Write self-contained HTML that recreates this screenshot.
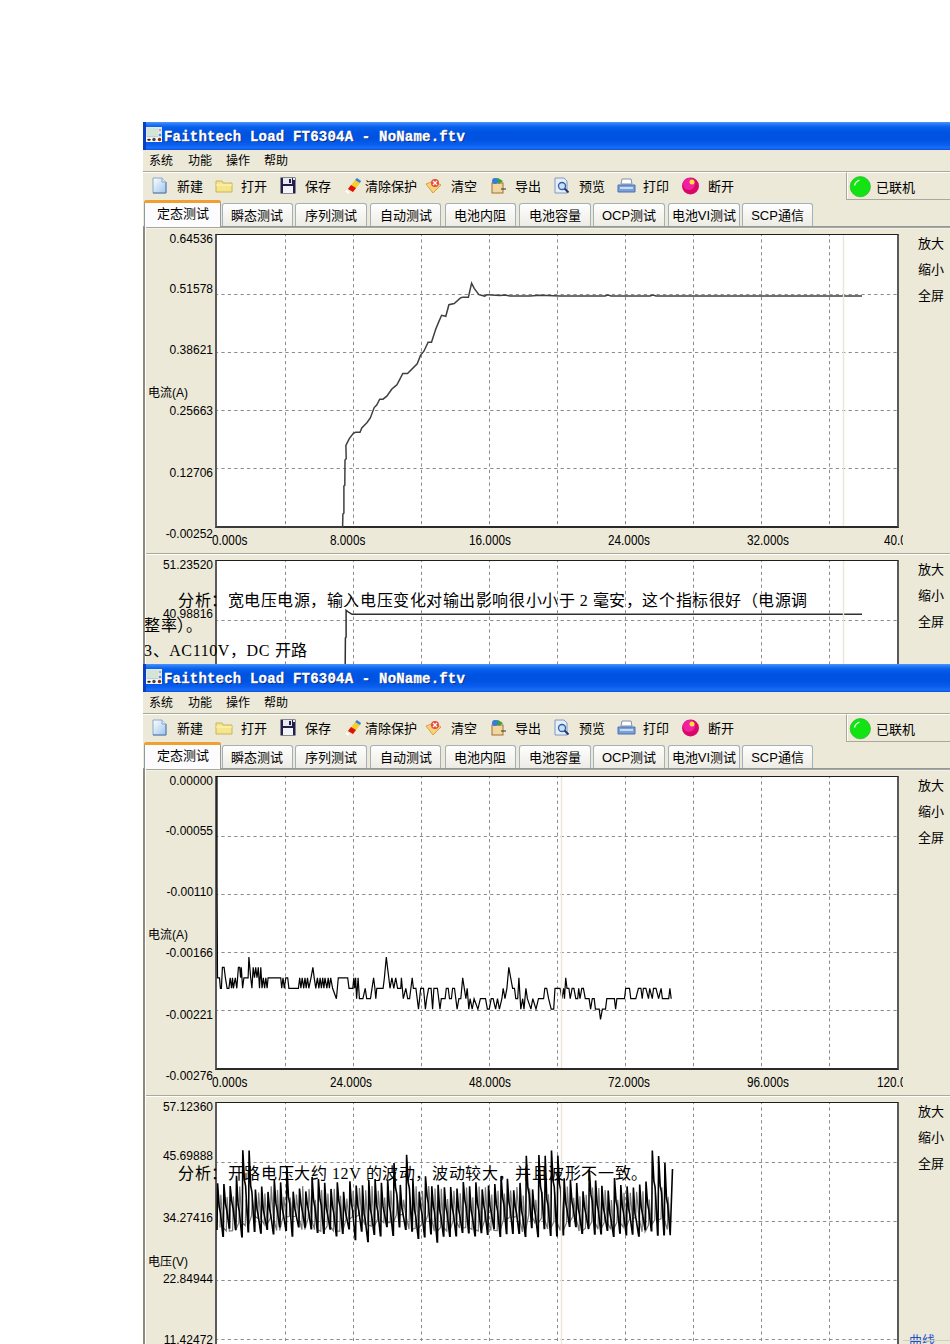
<!DOCTYPE html><html lang="zh-CN"><head><meta charset="utf-8"><style>
html,body{margin:0;padding:0;width:950px;height:1344px;overflow:hidden;background:#fff;position:relative}
.t{position:absolute;white-space:nowrap;line-height:1}
.r{position:absolute}
</style></head><body>
<div class="r" style="left:143px;top:122px;width:807px;height:1222px;background:#ECE9D8"></div>
<div class="r" style="left:143px;top:122px;width:807px;height:28px;background:linear-gradient(#4a98fc 0px,#2a7af6 2px,#0860ec 5px,#0054e3 10px,#0052e0 17px,#0a5ff0 23px,#1a6ff8 26px,#0a4fd8 28px)"></div>
<div class="r" style="left:143px;top:122px;width:3px;height:28px;background:#0a3fc0"></div>
<svg class="r" style="left:146px;top:127px" width="16" height="15" viewBox="0 0 16 15"><rect x="0" y="0" width="16" height="15" fill="#e4e8ec"/><rect x="1" y="1" width="11" height="8" fill="#d2e6d8"/><rect x="1" y="9" width="11" height="1" fill="#c8ccd0"/><circle cx="14" cy="3" r="1.3" fill="#b0b0b0"/><circle cx="14" cy="8" r="1.3" fill="#5a90d8"/><rect x="0" y="10.5" width="16" height="4.5" fill="#f8f8f8"/><ellipse cx="3" cy="12.7" rx="1.8" ry="1" fill="#222"/><circle cx="8" cy="12.5" r="1.7" fill="#444"/><circle cx="13.5" cy="12.5" r="1.7" fill="#8a2a10"/></svg>
<div class="t" style="left:164px;top:130px;font-size:14px;color:#fff;font-family:'Liberation Mono', monospace;font-weight:bold;line-height:14px;letter-spacing:0.2px;-webkit-text-stroke:0.3px #fff;text-shadow:1px 1px 0 #0a246a">Faithtech Load FT6304A - NoName.ftv</div>
<div class="t" style="left:149px;top:153px;font-size:12px;color:#000;font-family:'Liberation Sans', sans-serif;line-height:16px">系统</div>
<div class="t" style="left:188px;top:153px;font-size:12px;color:#000;font-family:'Liberation Sans', sans-serif;line-height:16px">功能</div>
<div class="t" style="left:226px;top:153px;font-size:12px;color:#000;font-family:'Liberation Sans', sans-serif;line-height:16px">操作</div>
<div class="t" style="left:264px;top:153px;font-size:12px;color:#000;font-family:'Liberation Sans', sans-serif;line-height:16px">帮助</div>
<div class="r" style="left:143px;top:171px;width:807px;height:1px;background:#aca899"></div>
<div class="r" style="left:143px;top:172px;width:807px;height:1px;background:#fff"></div>
<div class="t" style="left:176.5px;top:179px;font-size:13px;color:#000;font-family:'Liberation Sans', sans-serif;line-height:16px">新建</div>
<div class="t" style="left:241px;top:179px;font-size:13px;color:#000;font-family:'Liberation Sans', sans-serif;line-height:16px">打开</div>
<div class="t" style="left:305px;top:179px;font-size:13px;color:#000;font-family:'Liberation Sans', sans-serif;line-height:16px">保存</div>
<div class="t" style="left:364.5px;top:179px;font-size:13px;color:#000;font-family:'Liberation Sans', sans-serif;line-height:16px">清除保护</div>
<div class="t" style="left:450.5px;top:179px;font-size:13px;color:#000;font-family:'Liberation Sans', sans-serif;line-height:16px">清空</div>
<div class="t" style="left:515px;top:179px;font-size:13px;color:#000;font-family:'Liberation Sans', sans-serif;line-height:16px">导出</div>
<div class="t" style="left:578.5px;top:179px;font-size:13px;color:#000;font-family:'Liberation Sans', sans-serif;line-height:16px">预览</div>
<div class="t" style="left:643px;top:179px;font-size:13px;color:#000;font-family:'Liberation Sans', sans-serif;line-height:16px">打印</div>
<div class="t" style="left:707.5px;top:179px;font-size:13px;color:#000;font-family:'Liberation Sans', sans-serif;line-height:16px">断开</div>
<svg class="r" style="left:152px;top:177px" width="15" height="17" viewBox="0 0 15 17"><defs><linearGradient id="nd122" x1="0" y1="0" x2="1" y2="1"><stop offset="0" stop-color="#ffffff"/><stop offset="1" stop-color="#9cc4ec"/></linearGradient></defs><path d="M1 1h9l4 4v11H1z" fill="url(#nd122)" stroke="#8aa8cc"/><path d="M14 5v11H1" fill="none" stroke="#5a7ca8"/><path d="M10 1v4h4" fill="#dfeaf6" stroke="#8aa8cc"/></svg>
<svg class="r" style="left:215px;top:178px" width="18" height="15" viewBox="0 0 18 15"><path d="M1 3h6l1 2h9v9H1z" fill="#f6e58a" stroke="#c7b45a"/><path d="M1 7h16" stroke="#fff6c0"/></svg>
<svg class="r" style="left:280px;top:177px" width="16" height="17" viewBox="0 0 16 17"><path d="M0.5 0.5h15v16h-15z" fill="#20204a"/><rect x="3" y="1" width="9" height="6" fill="#e8e8f0"/><rect x="9" y="2" width="2" height="4" fill="#20204a"/><rect x="3" y="9" width="10" height="7" fill="#f4f4f8"/><rect x="13" y="1" width="2" height="2" fill="#ecebe0"/></svg>
<svg class="r" style="left:345px;top:177px" width="17" height="17" viewBox="0 0 17 17"><path d="M3 12l7-9 5 3-7 9z" fill="#f4d02a"/><path d="M3 12l3-4 5 3-3 4z" fill="#e01010"/><path d="M10 3l2-2 4 3-1 2z" fill="#3a7ad8"/><path d="M1 14l3 2" stroke="#fff" stroke-width="2"/></svg>
<svg class="r" style="left:425px;top:177px" width="17" height="17" viewBox="0 0 17 17"><path d="M1 7l8-3 7 4-8 8z" fill="#f6d27a" stroke="#d8a040"/><circle cx="10" cy="6" r="4" fill="#e84a3a"/><path d="M8 4l4 4M12 4l-4 4" stroke="#fff" stroke-width="1.3"/></svg>
<svg class="r" style="left:489px;top:177px" width="18" height="18" viewBox="0 0 18 18"><rect x="3" y="6" width="11" height="10" fill="#f2d6a0" stroke="#a07030"/><path d="M4 2l5 -1 5 3-4 3z" fill="#3aa040"/><circle cx="6" cy="4" r="3" fill="#3a7ad8"/><path d="M12 12h5" stroke="#333"/></svg>
<svg class="r" style="left:554px;top:177px" width="17" height="17" viewBox="0 0 17 17"><path d="M1 1h9l3 3v12H1z" fill="#e6eefa" stroke="#8098c0"/><circle cx="8" cy="9" r="3.5" fill="#c8e0f8" stroke="#3060a0" stroke-width="1.3"/><path d="M10.5 11.5l4 4" stroke="#203870" stroke-width="2"/></svg>
<svg class="r" style="left:617px;top:178px" width="19" height="16" viewBox="0 0 19 16"><path d="M5 1h9l1 5H4z" fill="#fff" stroke="#8090b0"/><path d="M1 7h17v7H1z" fill="#7aa0d8" stroke="#4a70b0"/><rect x="3" y="9" width="13" height="2" fill="#c8daf4"/></svg>
<svg class="r" style="left:681px;top:177px" width="19" height="18" viewBox="0 0 19 18"><circle cx="9.5" cy="9" r="8.5" fill="#d80868"/><circle cx="8" cy="7" r="6" fill="#f020a0"/><circle cx="11" cy="5" r="2.5" fill="#ffe040"/></svg>
<div class="r" style="left:846px;top:172px;width:110px;height:28px;border-top:1px solid #fff;border-left:1px solid #aca899;border-bottom:1px solid #aca899;box-sizing:border-box"></div>
<div class="r" style="left:847px;top:173px;width:1px;height:26px;background:#fff"></div>
<svg class="r" style="left:849px;top:176px" width="23" height="23" viewBox="0 0 23 23"><circle cx="11.3" cy="10.7" r="10.1" fill="#12e312" stroke="#2fb82f" stroke-width="0.8"/><path d="M5.5 9.5 Q6.5 5.5 10.5 4.2" stroke="#e8ffe8" stroke-width="1.3" fill="none"/></svg>
<div class="t" style="left:876px;top:180px;font-size:13px;color:#000;font-family:'Liberation Sans', sans-serif;line-height:16px">已联机</div>
<div class="r" style="left:143px;top:226px;width:807px;height:1px;background:#919b9c"></div>
<div class="r" style="left:222px;top:203px;width:70.5px;height:23px;background:linear-gradient(#fefefe,#f4f3ee 60%,#ecebe5);border:1px solid #a4b0b8;border-bottom:none;border-radius:3px 3px 0 0;box-sizing:border-box"></div>
<div class="t" style="left:222px;top:208px;width:70.5px;text-align:center;font-size:13px;line-height:16px;font-family:'Liberation Sans', sans-serif">瞬态测试</div>
<div class="r" style="left:295px;top:203px;width:72px;height:23px;background:linear-gradient(#fefefe,#f4f3ee 60%,#ecebe5);border:1px solid #a4b0b8;border-bottom:none;border-radius:3px 3px 0 0;box-sizing:border-box"></div>
<div class="t" style="left:295px;top:208px;width:72px;text-align:center;font-size:13px;line-height:16px;font-family:'Liberation Sans', sans-serif">序列测试</div>
<div class="r" style="left:370px;top:203px;width:71px;height:23px;background:linear-gradient(#fefefe,#f4f3ee 60%,#ecebe5);border:1px solid #a4b0b8;border-bottom:none;border-radius:3px 3px 0 0;box-sizing:border-box"></div>
<div class="t" style="left:370px;top:208px;width:71px;text-align:center;font-size:13px;line-height:16px;font-family:'Liberation Sans', sans-serif">自动测试</div>
<div class="r" style="left:444.5px;top:203px;width:71.5px;height:23px;background:linear-gradient(#fefefe,#f4f3ee 60%,#ecebe5);border:1px solid #a4b0b8;border-bottom:none;border-radius:3px 3px 0 0;box-sizing:border-box"></div>
<div class="t" style="left:444.5px;top:208px;width:71.5px;text-align:center;font-size:13px;line-height:16px;font-family:'Liberation Sans', sans-serif">电池内阻</div>
<div class="r" style="left:519px;top:203px;width:72px;height:23px;background:linear-gradient(#fefefe,#f4f3ee 60%,#ecebe5);border:1px solid #a4b0b8;border-bottom:none;border-radius:3px 3px 0 0;box-sizing:border-box"></div>
<div class="t" style="left:519px;top:208px;width:72px;text-align:center;font-size:13px;line-height:16px;font-family:'Liberation Sans', sans-serif">电池容量</div>
<div class="r" style="left:593px;top:203px;width:72px;height:23px;background:linear-gradient(#fefefe,#f4f3ee 60%,#ecebe5);border:1px solid #a4b0b8;border-bottom:none;border-radius:3px 3px 0 0;box-sizing:border-box"></div>
<div class="t" style="left:593px;top:208px;width:72px;text-align:center;font-size:13px;line-height:16px;font-family:'Liberation Sans', sans-serif">OCP测试</div>
<div class="r" style="left:668px;top:203px;width:72px;height:23px;background:linear-gradient(#fefefe,#f4f3ee 60%,#ecebe5);border:1px solid #a4b0b8;border-bottom:none;border-radius:3px 3px 0 0;box-sizing:border-box"></div>
<div class="t" style="left:668px;top:208px;width:72px;text-align:center;font-size:13px;line-height:16px;font-family:'Liberation Sans', sans-serif">电池VI测试</div>
<div class="r" style="left:742px;top:203px;width:71px;height:23px;background:linear-gradient(#fefefe,#f4f3ee 60%,#ecebe5);border:1px solid #a4b0b8;border-bottom:none;border-radius:3px 3px 0 0;box-sizing:border-box"></div>
<div class="t" style="left:742px;top:208px;width:71px;text-align:center;font-size:13px;line-height:16px;font-family:'Liberation Sans', sans-serif">SCP通信</div>
<div class="r" style="left:144px;top:200px;width:77px;height:27px;background:#fcfcfe;border:1px solid #919b9c;border-bottom:none;border-top:none;border-radius:3px 3px 0 0;box-sizing:border-box"></div>
<div class="r" style="left:144px;top:200px;width:77px;height:3px;background:#f0a030;border-radius:3px 3px 0 0"></div>
<div class="t" style="left:144px;top:206px;width:77px;text-align:center;font-size:13px;line-height:16px;font-family:'Liberation Sans', sans-serif">定态测试</div>
<div class="r" style="left:145px;top:227px;width:807px;height:1px;background:#a7a69c"></div>
<div class="r" style="left:145px;top:228px;width:807px;height:1px;background:#f4f2e8"></div>
<div class="r" style="left:143px;top:227px;width:2px;height:1117px;background:#8d8b80"></div>
<div class="r" style="left:145px;top:227px;width:1px;height:1117px;background:#fff"></div>
<div class="r" style="left:216px;top:234px;width:682px;height:294px;background:#fff"></div>
<svg class="r" style="left:0px;top:0px" width="950" height="1344" viewBox="0 0 950 1344"><clipPath id="c234"><rect x="216" y="234" width="682" height="294"/></clipPath><g clip-path="url(#c234)"><line x1="285.5" y1="234" x2="285.5" y2="528" stroke="#8c8c8c" stroke-width="1" stroke-dasharray="3.2 3.2" stroke-dashoffset="1"/><line x1="353.5" y1="234" x2="353.5" y2="528" stroke="#8c8c8c" stroke-width="1" stroke-dasharray="3.2 3.2" stroke-dashoffset="1"/><line x1="421.5" y1="234" x2="421.5" y2="528" stroke="#8c8c8c" stroke-width="1" stroke-dasharray="3.2 3.2" stroke-dashoffset="1"/><line x1="489.5" y1="234" x2="489.5" y2="528" stroke="#8c8c8c" stroke-width="1" stroke-dasharray="3.2 3.2" stroke-dashoffset="1"/><line x1="557.5" y1="234" x2="557.5" y2="528" stroke="#8c8c8c" stroke-width="1" stroke-dasharray="3.2 3.2" stroke-dashoffset="1"/><line x1="625.5" y1="234" x2="625.5" y2="528" stroke="#8c8c8c" stroke-width="1" stroke-dasharray="3.2 3.2" stroke-dashoffset="1"/><line x1="693.5" y1="234" x2="693.5" y2="528" stroke="#8c8c8c" stroke-width="1" stroke-dasharray="3.2 3.2" stroke-dashoffset="1"/><line x1="761.5" y1="234" x2="761.5" y2="528" stroke="#8c8c8c" stroke-width="1" stroke-dasharray="3.2 3.2" stroke-dashoffset="1"/><line x1="829.5" y1="234" x2="829.5" y2="528" stroke="#8c8c8c" stroke-width="1" stroke-dasharray="3.2 3.2" stroke-dashoffset="1"/><line x1="216" y1="294.5" x2="898" y2="294.5" stroke="#8c8c8c" stroke-width="1" stroke-dasharray="3.2 3.2" stroke-dashoffset="1"/><line x1="216" y1="352.5" x2="898" y2="352.5" stroke="#8c8c8c" stroke-width="1" stroke-dasharray="3.2 3.2" stroke-dashoffset="1"/><line x1="216" y1="410.5" x2="898" y2="410.5" stroke="#8c8c8c" stroke-width="1" stroke-dasharray="3.2 3.2" stroke-dashoffset="1"/><line x1="216" y1="468.5" x2="898" y2="468.5" stroke="#8c8c8c" stroke-width="1" stroke-dasharray="3.2 3.2" stroke-dashoffset="1"/></g></svg>
<div class="r" style="left:215px;top:234px;width:684px;height:294px;border-top:1px solid #1e1e1e;border-left:2px solid #5a5a5a;border-right:2px solid #5a5a5a;border-bottom:2px solid #2a2a2a;box-sizing:border-box"></div>
<svg class="r" style="left:0;top:0" width="950" height="1344"><polyline points="216.0,527.0 342.6,527.0 342.9,514.0 343.9,513.1 343.9,485.9 344.8,485.4 345.0,460.0 346.2,458.7 345.9,445.3 349.3,438.6 353.3,433.4 355.5,432.3 360.0,432.3 361.8,427.9 367.1,422.5 370.3,418.0 374.2,407.6 376.7,405.0 379.7,399.2 383.0,399.2 386.8,396.2 391.9,389.0 395.3,386.1 396.9,384.8 399.5,379.8 402.8,373.5 407.5,373.5 417.2,363.8 420.5,355.4 423.9,351.2 428.1,342.3 431.5,342.3 435.7,329.3 438.4,322.6 441.6,315.3 445.8,316.3 448.9,304.7 454.2,303.5 460.5,297.9 462.6,297.2 468.4,297.2 471.6,283.2 474.2,288.4 478.9,294.7 484.7,296.1 487.4,294.7 500.0,295.6 505.0,295.0 510.0,296.0 530.0,296.0 540.0,295.3 560.0,296.0 605.0,296.0 608.0,295.0 611.0,296.0 650.0,296.0 653.0,295.0 656.0,296.0 862.0,296.0" fill="none" stroke="#404040" stroke-width="1.5" stroke-linejoin="miter"/></svg>
<svg class="r" style="left:0;top:0" width="950" height="1344"><line x1="843.5" y1="235" x2="843.5" y2="526" stroke="#ebe7d9" stroke-width="1.4"/></svg>
<div class="t" style="left:101px;width:112px;text-align:right;top:233px;font-size:12px;line-height:12px;font-family:'Liberation Sans', sans-serif;color:#000">0.64536</div>
<div class="t" style="left:101px;width:112px;text-align:right;top:282.6px;font-size:12px;line-height:12px;font-family:'Liberation Sans', sans-serif;color:#000">0.51578</div>
<div class="t" style="left:101px;width:112px;text-align:right;top:343.90000000000003px;font-size:12px;line-height:12px;font-family:'Liberation Sans', sans-serif;color:#000">0.38621</div>
<div class="t" style="left:101px;width:112px;text-align:right;top:405.20000000000005px;font-size:12px;line-height:12px;font-family:'Liberation Sans', sans-serif;color:#000">0.25663</div>
<div class="t" style="left:101px;width:112px;text-align:right;top:466.5px;font-size:12px;line-height:12px;font-family:'Liberation Sans', sans-serif;color:#000">0.12706</div>
<div class="t" style="left:101px;width:112px;text-align:right;top:527.8px;font-size:12px;line-height:12px;font-family:'Liberation Sans', sans-serif;color:#000">-0.00252</div>
<div class="t" style="left:148px;top:387.0px;font-size:12px;line-height:12px;font-family:'Liberation Sans', sans-serif">电流(A)</div>
<div class="t" style="left:212px;top:533px;width:80px;overflow:hidden"><div style="font-size:14px;line-height:14px;font-family:'Liberation Sans', sans-serif;transform:scaleX(0.84);transform-origin:0 0">0.000s</div></div>
<div class="t" style="left:329.5px;top:533px;width:80px;overflow:hidden"><div style="font-size:14px;line-height:14px;font-family:'Liberation Sans', sans-serif;transform:scaleX(0.84);transform-origin:0 0">8.000s</div></div>
<div class="t" style="left:468.7px;top:533px;width:80px;overflow:hidden"><div style="font-size:14px;line-height:14px;font-family:'Liberation Sans', sans-serif;transform:scaleX(0.84);transform-origin:0 0">16.000s</div></div>
<div class="t" style="left:607.9px;top:533px;width:80px;overflow:hidden"><div style="font-size:14px;line-height:14px;font-family:'Liberation Sans', sans-serif;transform:scaleX(0.84);transform-origin:0 0">24.000s</div></div>
<div class="t" style="left:747.0999999999999px;top:533px;width:80px;overflow:hidden"><div style="font-size:14px;line-height:14px;font-family:'Liberation Sans', sans-serif;transform:scaleX(0.84);transform-origin:0 0">32.000s</div></div>
<div class="t" style="left:884.3px;top:533px;width:18.300000000000068px;overflow:hidden"><div style="font-size:14px;line-height:14px;font-family:'Liberation Sans', sans-serif;transform:scaleX(0.84);transform-origin:0 0">40.000s</div></div>
<div class="t" style="left:918px;top:236.5px;font-size:13px;line-height:14px;font-family:'Liberation Sans', sans-serif">放大</div>
<div class="t" style="left:918px;top:262.7px;font-size:13px;line-height:14px;font-family:'Liberation Sans', sans-serif">缩小</div>
<div class="t" style="left:918px;top:288.9px;font-size:13px;line-height:14px;font-family:'Liberation Sans', sans-serif">全屏</div>
<div class="r" style="left:146px;top:553px;width:804px;height:1px;background:#aca899"></div>
<div class="r" style="left:146px;top:554px;width:804px;height:1px;background:#fff"></div>
<div class="r" style="left:216px;top:560px;width:682px;height:294px;background:#fff"></div>
<svg class="r" style="left:0px;top:0px" width="950" height="1344" viewBox="0 0 950 1344"><clipPath id="c560"><rect x="216" y="560" width="682" height="294"/></clipPath><g clip-path="url(#c560)"><line x1="285.5" y1="560" x2="285.5" y2="854" stroke="#8c8c8c" stroke-width="1" stroke-dasharray="3.2 3.2" stroke-dashoffset="1"/><line x1="353.5" y1="560" x2="353.5" y2="854" stroke="#8c8c8c" stroke-width="1" stroke-dasharray="3.2 3.2" stroke-dashoffset="1"/><line x1="421.5" y1="560" x2="421.5" y2="854" stroke="#8c8c8c" stroke-width="1" stroke-dasharray="3.2 3.2" stroke-dashoffset="1"/><line x1="489.5" y1="560" x2="489.5" y2="854" stroke="#8c8c8c" stroke-width="1" stroke-dasharray="3.2 3.2" stroke-dashoffset="1"/><line x1="557.5" y1="560" x2="557.5" y2="854" stroke="#8c8c8c" stroke-width="1" stroke-dasharray="3.2 3.2" stroke-dashoffset="1"/><line x1="625.5" y1="560" x2="625.5" y2="854" stroke="#8c8c8c" stroke-width="1" stroke-dasharray="3.2 3.2" stroke-dashoffset="1"/><line x1="693.5" y1="560" x2="693.5" y2="854" stroke="#8c8c8c" stroke-width="1" stroke-dasharray="3.2 3.2" stroke-dashoffset="1"/><line x1="761.5" y1="560" x2="761.5" y2="854" stroke="#8c8c8c" stroke-width="1" stroke-dasharray="3.2 3.2" stroke-dashoffset="1"/><line x1="829.5" y1="560" x2="829.5" y2="854" stroke="#8c8c8c" stroke-width="1" stroke-dasharray="3.2 3.2" stroke-dashoffset="1"/><line x1="216" y1="620.5" x2="898" y2="620.5" stroke="#8c8c8c" stroke-width="1" stroke-dasharray="3.2 3.2" stroke-dashoffset="1"/><line x1="216" y1="679.5" x2="898" y2="679.5" stroke="#8c8c8c" stroke-width="1" stroke-dasharray="3.2 3.2" stroke-dashoffset="1"/><line x1="216" y1="738.5" x2="898" y2="738.5" stroke="#8c8c8c" stroke-width="1" stroke-dasharray="3.2 3.2" stroke-dashoffset="1"/><line x1="216" y1="797.5" x2="898" y2="797.5" stroke="#8c8c8c" stroke-width="1" stroke-dasharray="3.2 3.2" stroke-dashoffset="1"/></g></svg>
<div class="r" style="left:215px;top:560px;width:684px;height:294px;border-top:1px solid #1e1e1e;border-left:2px solid #5a5a5a;border-right:2px solid #5a5a5a;border-bottom:2px solid #2a2a2a;box-sizing:border-box"></div>
<svg class="r" style="left:0;top:0" width="950" height="1344"><polyline points="345.2,664.0 345.4,638.0 346.1,637.0 346.1,610.3 349.0,612.5 352.0,614.3 862.0,614.3" fill="none" stroke="#303030" stroke-width="1.5" stroke-linejoin="miter"/></svg>
<svg class="r" style="left:0;top:0" width="950" height="1344"><line x1="843.5" y1="561" x2="843.5" y2="852" stroke="#ebe7d9" stroke-width="1.4"/></svg>
<div class="t" style="left:101px;width:112px;text-align:right;top:559px;font-size:12px;line-height:12px;font-family:'Liberation Sans', sans-serif;color:#000">51.23520</div>
<div class="t" style="left:101px;width:112px;text-align:right;top:608.1px;font-size:12px;line-height:12px;font-family:'Liberation Sans', sans-serif;color:#000">40.98816</div>
<div class="t" style="left:101px;width:112px;text-align:right;top:669.5px;font-size:12px;line-height:12px;font-family:'Liberation Sans', sans-serif;color:#000">30.7</div>
<div class="t" style="left:101px;width:112px;text-align:right;top:730.9px;font-size:12px;line-height:12px;font-family:'Liberation Sans', sans-serif;color:#000">20.5</div>
<div class="t" style="left:101px;width:112px;text-align:right;top:792.3px;font-size:12px;line-height:12px;font-family:'Liberation Sans', sans-serif;color:#000">10.2</div>
<div class="t" style="left:101px;width:112px;text-align:right;top:853.7px;font-size:12px;line-height:12px;font-family:'Liberation Sans', sans-serif;color:#000">0.0</div>
<div class="t" style="left:148px;top:713.5px;font-size:12px;line-height:12px;font-family:'Liberation Sans', sans-serif">电压(V)</div>
<div class="t" style="left:918px;top:562.5px;font-size:13px;line-height:14px;font-family:'Liberation Sans', sans-serif">放大</div>
<div class="t" style="left:918px;top:588.7px;font-size:13px;line-height:14px;font-family:'Liberation Sans', sans-serif">缩小</div>
<div class="t" style="left:918px;top:614.9px;font-size:13px;line-height:14px;font-family:'Liberation Sans', sans-serif">全屏</div>
<div class="t" style="left:178px;top:592px;font-size:16px;line-height:18px;letter-spacing:0.55px;font-family:'Liberation Serif', serif">分析：宽电压电源，输入电压变化对输出影响很小小于 2 毫安，这个指标很好（电源调</div>
<div class="t" style="left:144px;top:617px;font-size:16px;line-height:18px;letter-spacing:0.5px;font-family:'Liberation Serif', serif">整率）。</div>
<div class="t" style="left:144px;top:642px;font-size:16px;line-height:18px;letter-spacing:0.6px;font-family:'Liberation Serif', serif">3、AC110V，DC 开路</div>
<div class="r" style="left:143px;top:664px;width:807px;height:680px;background:#ECE9D8"></div>
<div class="r" style="left:143px;top:664px;width:807px;height:28px;background:linear-gradient(#4a98fc 0px,#2a7af6 2px,#0860ec 5px,#0054e3 10px,#0052e0 17px,#0a5ff0 23px,#1a6ff8 26px,#0a4fd8 28px)"></div>
<div class="r" style="left:143px;top:664px;width:3px;height:28px;background:#0a3fc0"></div>
<svg class="r" style="left:146px;top:669px" width="16" height="15" viewBox="0 0 16 15"><rect x="0" y="0" width="16" height="15" fill="#e4e8ec"/><rect x="1" y="1" width="11" height="8" fill="#d2e6d8"/><rect x="1" y="9" width="11" height="1" fill="#c8ccd0"/><circle cx="14" cy="3" r="1.3" fill="#b0b0b0"/><circle cx="14" cy="8" r="1.3" fill="#5a90d8"/><rect x="0" y="10.5" width="16" height="4.5" fill="#f8f8f8"/><ellipse cx="3" cy="12.7" rx="1.8" ry="1" fill="#222"/><circle cx="8" cy="12.5" r="1.7" fill="#444"/><circle cx="13.5" cy="12.5" r="1.7" fill="#8a2a10"/></svg>
<div class="t" style="left:164px;top:672px;font-size:14px;color:#fff;font-family:'Liberation Mono', monospace;font-weight:bold;line-height:14px;letter-spacing:0.2px;-webkit-text-stroke:0.3px #fff;text-shadow:1px 1px 0 #0a246a">Faithtech Load FT6304A - NoName.ftv</div>
<div class="t" style="left:149px;top:695px;font-size:12px;color:#000;font-family:'Liberation Sans', sans-serif;line-height:16px">系统</div>
<div class="t" style="left:188px;top:695px;font-size:12px;color:#000;font-family:'Liberation Sans', sans-serif;line-height:16px">功能</div>
<div class="t" style="left:226px;top:695px;font-size:12px;color:#000;font-family:'Liberation Sans', sans-serif;line-height:16px">操作</div>
<div class="t" style="left:264px;top:695px;font-size:12px;color:#000;font-family:'Liberation Sans', sans-serif;line-height:16px">帮助</div>
<div class="r" style="left:143px;top:713px;width:807px;height:1px;background:#aca899"></div>
<div class="r" style="left:143px;top:714px;width:807px;height:1px;background:#fff"></div>
<div class="t" style="left:176.5px;top:721px;font-size:13px;color:#000;font-family:'Liberation Sans', sans-serif;line-height:16px">新建</div>
<div class="t" style="left:241px;top:721px;font-size:13px;color:#000;font-family:'Liberation Sans', sans-serif;line-height:16px">打开</div>
<div class="t" style="left:305px;top:721px;font-size:13px;color:#000;font-family:'Liberation Sans', sans-serif;line-height:16px">保存</div>
<div class="t" style="left:364.5px;top:721px;font-size:13px;color:#000;font-family:'Liberation Sans', sans-serif;line-height:16px">清除保护</div>
<div class="t" style="left:450.5px;top:721px;font-size:13px;color:#000;font-family:'Liberation Sans', sans-serif;line-height:16px">清空</div>
<div class="t" style="left:515px;top:721px;font-size:13px;color:#000;font-family:'Liberation Sans', sans-serif;line-height:16px">导出</div>
<div class="t" style="left:578.5px;top:721px;font-size:13px;color:#000;font-family:'Liberation Sans', sans-serif;line-height:16px">预览</div>
<div class="t" style="left:643px;top:721px;font-size:13px;color:#000;font-family:'Liberation Sans', sans-serif;line-height:16px">打印</div>
<div class="t" style="left:707.5px;top:721px;font-size:13px;color:#000;font-family:'Liberation Sans', sans-serif;line-height:16px">断开</div>
<svg class="r" style="left:152px;top:719px" width="15" height="17" viewBox="0 0 15 17"><defs><linearGradient id="nd664" x1="0" y1="0" x2="1" y2="1"><stop offset="0" stop-color="#ffffff"/><stop offset="1" stop-color="#9cc4ec"/></linearGradient></defs><path d="M1 1h9l4 4v11H1z" fill="url(#nd664)" stroke="#8aa8cc"/><path d="M14 5v11H1" fill="none" stroke="#5a7ca8"/><path d="M10 1v4h4" fill="#dfeaf6" stroke="#8aa8cc"/></svg>
<svg class="r" style="left:215px;top:720px" width="18" height="15" viewBox="0 0 18 15"><path d="M1 3h6l1 2h9v9H1z" fill="#f6e58a" stroke="#c7b45a"/><path d="M1 7h16" stroke="#fff6c0"/></svg>
<svg class="r" style="left:280px;top:719px" width="16" height="17" viewBox="0 0 16 17"><path d="M0.5 0.5h15v16h-15z" fill="#20204a"/><rect x="3" y="1" width="9" height="6" fill="#e8e8f0"/><rect x="9" y="2" width="2" height="4" fill="#20204a"/><rect x="3" y="9" width="10" height="7" fill="#f4f4f8"/><rect x="13" y="1" width="2" height="2" fill="#ecebe0"/></svg>
<svg class="r" style="left:345px;top:719px" width="17" height="17" viewBox="0 0 17 17"><path d="M3 12l7-9 5 3-7 9z" fill="#f4d02a"/><path d="M3 12l3-4 5 3-3 4z" fill="#e01010"/><path d="M10 3l2-2 4 3-1 2z" fill="#3a7ad8"/><path d="M1 14l3 2" stroke="#fff" stroke-width="2"/></svg>
<svg class="r" style="left:425px;top:719px" width="17" height="17" viewBox="0 0 17 17"><path d="M1 7l8-3 7 4-8 8z" fill="#f6d27a" stroke="#d8a040"/><circle cx="10" cy="6" r="4" fill="#e84a3a"/><path d="M8 4l4 4M12 4l-4 4" stroke="#fff" stroke-width="1.3"/></svg>
<svg class="r" style="left:489px;top:719px" width="18" height="18" viewBox="0 0 18 18"><rect x="3" y="6" width="11" height="10" fill="#f2d6a0" stroke="#a07030"/><path d="M4 2l5 -1 5 3-4 3z" fill="#3aa040"/><circle cx="6" cy="4" r="3" fill="#3a7ad8"/><path d="M12 12h5" stroke="#333"/></svg>
<svg class="r" style="left:554px;top:719px" width="17" height="17" viewBox="0 0 17 17"><path d="M1 1h9l3 3v12H1z" fill="#e6eefa" stroke="#8098c0"/><circle cx="8" cy="9" r="3.5" fill="#c8e0f8" stroke="#3060a0" stroke-width="1.3"/><path d="M10.5 11.5l4 4" stroke="#203870" stroke-width="2"/></svg>
<svg class="r" style="left:617px;top:720px" width="19" height="16" viewBox="0 0 19 16"><path d="M5 1h9l1 5H4z" fill="#fff" stroke="#8090b0"/><path d="M1 7h17v7H1z" fill="#7aa0d8" stroke="#4a70b0"/><rect x="3" y="9" width="13" height="2" fill="#c8daf4"/></svg>
<svg class="r" style="left:681px;top:719px" width="19" height="18" viewBox="0 0 19 18"><circle cx="9.5" cy="9" r="8.5" fill="#d80868"/><circle cx="8" cy="7" r="6" fill="#f020a0"/><circle cx="11" cy="5" r="2.5" fill="#ffe040"/></svg>
<div class="r" style="left:846px;top:714px;width:110px;height:28px;border-top:1px solid #fff;border-left:1px solid #aca899;border-bottom:1px solid #aca899;box-sizing:border-box"></div>
<div class="r" style="left:847px;top:715px;width:1px;height:26px;background:#fff"></div>
<svg class="r" style="left:849px;top:718px" width="23" height="23" viewBox="0 0 23 23"><circle cx="11.3" cy="10.7" r="10.1" fill="#12e312" stroke="#2fb82f" stroke-width="0.8"/><path d="M5.5 9.5 Q6.5 5.5 10.5 4.2" stroke="#e8ffe8" stroke-width="1.3" fill="none"/></svg>
<div class="t" style="left:876px;top:722px;font-size:13px;color:#000;font-family:'Liberation Sans', sans-serif;line-height:16px">已联机</div>
<div class="r" style="left:143px;top:768px;width:807px;height:1px;background:#919b9c"></div>
<div class="r" style="left:222px;top:745px;width:70.5px;height:23px;background:linear-gradient(#fefefe,#f4f3ee 60%,#ecebe5);border:1px solid #a4b0b8;border-bottom:none;border-radius:3px 3px 0 0;box-sizing:border-box"></div>
<div class="t" style="left:222px;top:750px;width:70.5px;text-align:center;font-size:13px;line-height:16px;font-family:'Liberation Sans', sans-serif">瞬态测试</div>
<div class="r" style="left:295px;top:745px;width:72px;height:23px;background:linear-gradient(#fefefe,#f4f3ee 60%,#ecebe5);border:1px solid #a4b0b8;border-bottom:none;border-radius:3px 3px 0 0;box-sizing:border-box"></div>
<div class="t" style="left:295px;top:750px;width:72px;text-align:center;font-size:13px;line-height:16px;font-family:'Liberation Sans', sans-serif">序列测试</div>
<div class="r" style="left:370px;top:745px;width:71px;height:23px;background:linear-gradient(#fefefe,#f4f3ee 60%,#ecebe5);border:1px solid #a4b0b8;border-bottom:none;border-radius:3px 3px 0 0;box-sizing:border-box"></div>
<div class="t" style="left:370px;top:750px;width:71px;text-align:center;font-size:13px;line-height:16px;font-family:'Liberation Sans', sans-serif">自动测试</div>
<div class="r" style="left:444.5px;top:745px;width:71.5px;height:23px;background:linear-gradient(#fefefe,#f4f3ee 60%,#ecebe5);border:1px solid #a4b0b8;border-bottom:none;border-radius:3px 3px 0 0;box-sizing:border-box"></div>
<div class="t" style="left:444.5px;top:750px;width:71.5px;text-align:center;font-size:13px;line-height:16px;font-family:'Liberation Sans', sans-serif">电池内阻</div>
<div class="r" style="left:519px;top:745px;width:72px;height:23px;background:linear-gradient(#fefefe,#f4f3ee 60%,#ecebe5);border:1px solid #a4b0b8;border-bottom:none;border-radius:3px 3px 0 0;box-sizing:border-box"></div>
<div class="t" style="left:519px;top:750px;width:72px;text-align:center;font-size:13px;line-height:16px;font-family:'Liberation Sans', sans-serif">电池容量</div>
<div class="r" style="left:593px;top:745px;width:72px;height:23px;background:linear-gradient(#fefefe,#f4f3ee 60%,#ecebe5);border:1px solid #a4b0b8;border-bottom:none;border-radius:3px 3px 0 0;box-sizing:border-box"></div>
<div class="t" style="left:593px;top:750px;width:72px;text-align:center;font-size:13px;line-height:16px;font-family:'Liberation Sans', sans-serif">OCP测试</div>
<div class="r" style="left:668px;top:745px;width:72px;height:23px;background:linear-gradient(#fefefe,#f4f3ee 60%,#ecebe5);border:1px solid #a4b0b8;border-bottom:none;border-radius:3px 3px 0 0;box-sizing:border-box"></div>
<div class="t" style="left:668px;top:750px;width:72px;text-align:center;font-size:13px;line-height:16px;font-family:'Liberation Sans', sans-serif">电池VI测试</div>
<div class="r" style="left:742px;top:745px;width:71px;height:23px;background:linear-gradient(#fefefe,#f4f3ee 60%,#ecebe5);border:1px solid #a4b0b8;border-bottom:none;border-radius:3px 3px 0 0;box-sizing:border-box"></div>
<div class="t" style="left:742px;top:750px;width:71px;text-align:center;font-size:13px;line-height:16px;font-family:'Liberation Sans', sans-serif">SCP通信</div>
<div class="r" style="left:144px;top:742px;width:77px;height:27px;background:#fcfcfe;border:1px solid #919b9c;border-bottom:none;border-top:none;border-radius:3px 3px 0 0;box-sizing:border-box"></div>
<div class="r" style="left:144px;top:742px;width:77px;height:3px;background:#f0a030;border-radius:3px 3px 0 0"></div>
<div class="t" style="left:144px;top:748px;width:77px;text-align:center;font-size:13px;line-height:16px;font-family:'Liberation Sans', sans-serif">定态测试</div>
<div class="r" style="left:145px;top:769px;width:807px;height:1px;background:#a7a69c"></div>
<div class="r" style="left:145px;top:770px;width:807px;height:1px;background:#f4f2e8"></div>
<div class="r" style="left:143px;top:769px;width:2px;height:575px;background:#8d8b80"></div>
<div class="r" style="left:145px;top:769px;width:1px;height:575px;background:#fff"></div>
<div class="r" style="left:216px;top:776px;width:682px;height:294px;background:#fff"></div>
<svg class="r" style="left:0px;top:0px" width="950" height="1344" viewBox="0 0 950 1344"><clipPath id="c776"><rect x="216" y="776" width="682" height="294"/></clipPath><g clip-path="url(#c776)"><line x1="285.5" y1="776" x2="285.5" y2="1070" stroke="#8c8c8c" stroke-width="1" stroke-dasharray="3.2 3.2" stroke-dashoffset="1"/><line x1="353.5" y1="776" x2="353.5" y2="1070" stroke="#8c8c8c" stroke-width="1" stroke-dasharray="3.2 3.2" stroke-dashoffset="1"/><line x1="421.5" y1="776" x2="421.5" y2="1070" stroke="#8c8c8c" stroke-width="1" stroke-dasharray="3.2 3.2" stroke-dashoffset="1"/><line x1="489.5" y1="776" x2="489.5" y2="1070" stroke="#8c8c8c" stroke-width="1" stroke-dasharray="3.2 3.2" stroke-dashoffset="1"/><line x1="557.5" y1="776" x2="557.5" y2="1070" stroke="#8c8c8c" stroke-width="1" stroke-dasharray="3.2 3.2" stroke-dashoffset="1"/><line x1="625.5" y1="776" x2="625.5" y2="1070" stroke="#8c8c8c" stroke-width="1" stroke-dasharray="3.2 3.2" stroke-dashoffset="1"/><line x1="693.5" y1="776" x2="693.5" y2="1070" stroke="#8c8c8c" stroke-width="1" stroke-dasharray="3.2 3.2" stroke-dashoffset="1"/><line x1="761.5" y1="776" x2="761.5" y2="1070" stroke="#8c8c8c" stroke-width="1" stroke-dasharray="3.2 3.2" stroke-dashoffset="1"/><line x1="829.5" y1="776" x2="829.5" y2="1070" stroke="#8c8c8c" stroke-width="1" stroke-dasharray="3.2 3.2" stroke-dashoffset="1"/><line x1="216" y1="836.5" x2="898" y2="836.5" stroke="#8c8c8c" stroke-width="1" stroke-dasharray="3.2 3.2" stroke-dashoffset="1"/><line x1="216" y1="894.5" x2="898" y2="894.5" stroke="#8c8c8c" stroke-width="1" stroke-dasharray="3.2 3.2" stroke-dashoffset="1"/><line x1="216" y1="952.5" x2="898" y2="952.5" stroke="#8c8c8c" stroke-width="1" stroke-dasharray="3.2 3.2" stroke-dashoffset="1"/><line x1="216" y1="1010.5" x2="898" y2="1010.5" stroke="#8c8c8c" stroke-width="1" stroke-dasharray="3.2 3.2" stroke-dashoffset="1"/></g></svg>
<div class="r" style="left:215px;top:776px;width:684px;height:294px;border-top:1px solid #1e1e1e;border-left:2px solid #5a5a5a;border-right:2px solid #5a5a5a;border-bottom:2px solid #2a2a2a;box-sizing:border-box"></div>
<svg class="r" style="left:0;top:0" width="950" height="1344"><polyline points="217.0,776.0 217.0,878.0 217.5,977.8 218.2,977.8 219.5,977.8 220.4,988.3 221.4,988.3 222.4,967.4 224.1,967.4 225.4,977.8 227.1,988.3 228.9,988.3 230.2,977.8 231.5,988.3 232.5,977.8 233.4,988.3 235.3,977.8 236.8,988.3 238.4,967.4 239.7,967.4 240.6,977.8 241.3,967.4 242.6,988.3 243.9,977.8 246.6,977.8 248.1,977.8 248.9,957.0 249.8,967.4 250.7,977.8 251.9,988.3 253.2,967.4 254.5,977.8 255.7,967.4 257.0,977.8 258.3,967.4 259.5,988.3 260.8,967.4 262.0,988.3 263.3,977.8 264.6,988.3 265.8,977.8 267.1,988.3 268.1,977.8 280.7,977.8 281.7,988.3 283.0,977.8 284.3,988.3 285.8,977.8 287.7,977.8 288.9,988.3 290.8,988.3 298.4,988.3 299.7,977.8 300.9,988.3 302.2,977.8 303.7,988.3 305.0,977.8 306.2,988.3 307.5,977.8 308.8,988.3 311.0,977.8 312.9,967.4 314.2,977.8 315.8,988.3 317.4,977.8 318.9,988.3 320.1,977.8 321.4,988.3 322.7,977.8 323.9,988.3 325.0,977.8 326.9,988.3 328.2,977.8 329.4,988.3 330.7,977.8 332.6,988.3 336.4,998.7 338.3,977.8 347.7,977.8 349.0,988.3 352.8,988.3 353.8,977.8 354.7,988.3 355.6,977.8 356.6,998.7 358.1,977.8 359.4,998.7 362.9,998.7 365.2,988.3 366.7,998.7 370.5,998.7 372.0,988.3 373.6,977.8 374.9,988.3 375.8,998.7 376.8,988.3 383.1,988.3 384.4,977.8 386.3,957.0 387.5,967.4 388.8,977.8 390.0,988.3 391.9,977.8 393.8,988.3 395.7,977.8 397.6,988.3 400.8,988.3 401.4,977.8 403.3,998.7 405.8,988.3 407.7,998.7 409.6,998.7 412.2,977.8 413.4,988.3 415.9,988.3 418.5,1009.1 420.7,988.3 423.5,988.3 425.4,1009.1 426.7,998.7 428.6,988.3 431.1,988.3 432.6,1009.1 433.9,988.3 437.4,988.3 440.0,1009.1 441.3,998.7 445.1,998.7 446.3,988.3 448.2,988.3 449.5,998.7 451.4,998.7 452.6,988.3 454.5,988.3 457.1,1009.1 458.9,998.7 460.8,998.7 462.7,977.8 464.3,988.3 465.9,998.7 467.2,988.3 468.8,1009.1 470.1,998.7 472.2,1009.1 474.1,998.7 477.9,1009.1 480.4,998.7 485.5,998.7 487.4,1009.1 489.3,1009.1 491.2,998.7 493.1,998.7 495.6,1009.1 497.5,998.7 499.4,1009.1 501.9,998.7 503.2,988.3 505.0,998.7 506.9,988.3 508.8,967.4 510.7,977.8 512.6,988.3 514.5,988.3 515.8,998.7 517.7,998.7 518.9,977.8 520.8,1009.1 522.7,998.7 524.0,1009.1 525.9,988.3 527.4,998.7 530.9,1009.1 532.8,998.7 536.0,1009.1 538.5,998.7 543.6,998.7 544.8,988.3 546.7,988.3 548.6,998.7 551.2,1009.1 553.7,1009.1 555.0,988.3 560.1,988.3 561.9,998.7 563.6,988.3 564.5,998.7 565.7,977.8 567.0,988.3 568.9,988.3 570.2,998.7 572.1,988.3 573.9,988.3 575.8,998.7 577.7,998.7 578.7,988.3 580.0,998.7 581.8,988.3 583.4,988.3 585.3,998.7 589.1,998.7 590.6,1009.1 592.3,998.7 594.2,998.7 595.4,1009.1 599.2,1009.1 600.5,1019.5 602.4,1009.1 605.5,1009.1 606.8,998.7 614.4,998.7 615.6,1009.1 616.9,998.7 624.5,998.7 625.7,988.3 629.5,988.3 630.8,998.7 635.8,998.7 638.4,988.3 640.9,988.3 642.2,998.7 643.4,988.3 645.9,988.3 648.5,998.7 649.7,988.3 652.3,998.7 653.5,988.3 656.0,988.3 658.6,998.7 661.1,988.3 662.4,998.7 668.7,998.7 669.9,988.3 671.2,998.7" fill="none" stroke="#000" stroke-width="1.2" stroke-linejoin="miter"/></svg>
<svg class="r" style="left:0;top:0" width="950" height="1344"><line x1="561.5" y1="777" x2="561.5" y2="1068" stroke="#ebe7d9" stroke-width="1.4"/></svg>
<div class="t" style="left:101px;width:112px;text-align:right;top:775px;font-size:12px;line-height:12px;font-family:'Liberation Sans', sans-serif;color:#000">0.00000</div>
<div class="t" style="left:101px;width:112px;text-align:right;top:824.6px;font-size:12px;line-height:12px;font-family:'Liberation Sans', sans-serif;color:#000">-0.00055</div>
<div class="t" style="left:101px;width:112px;text-align:right;top:885.9px;font-size:12px;line-height:12px;font-family:'Liberation Sans', sans-serif;color:#000">-0.00110</div>
<div class="t" style="left:101px;width:112px;text-align:right;top:947.2px;font-size:12px;line-height:12px;font-family:'Liberation Sans', sans-serif;color:#000">-0.00166</div>
<div class="t" style="left:101px;width:112px;text-align:right;top:1008.5px;font-size:12px;line-height:12px;font-family:'Liberation Sans', sans-serif;color:#000">-0.00221</div>
<div class="t" style="left:101px;width:112px;text-align:right;top:1069.8px;font-size:12px;line-height:12px;font-family:'Liberation Sans', sans-serif;color:#000">-0.00276</div>
<div class="t" style="left:148px;top:929.0px;font-size:12px;line-height:12px;font-family:'Liberation Sans', sans-serif">电流(A)</div>
<div class="t" style="left:212px;top:1075px;width:80px;overflow:hidden"><div style="font-size:14px;line-height:14px;font-family:'Liberation Sans', sans-serif;transform:scaleX(0.84);transform-origin:0 0">0.000s</div></div>
<div class="t" style="left:329.5px;top:1075px;width:80px;overflow:hidden"><div style="font-size:14px;line-height:14px;font-family:'Liberation Sans', sans-serif;transform:scaleX(0.84);transform-origin:0 0">24.000s</div></div>
<div class="t" style="left:468.7px;top:1075px;width:80px;overflow:hidden"><div style="font-size:14px;line-height:14px;font-family:'Liberation Sans', sans-serif;transform:scaleX(0.84);transform-origin:0 0">48.000s</div></div>
<div class="t" style="left:607.9px;top:1075px;width:80px;overflow:hidden"><div style="font-size:14px;line-height:14px;font-family:'Liberation Sans', sans-serif;transform:scaleX(0.84);transform-origin:0 0">72.000s</div></div>
<div class="t" style="left:747.0999999999999px;top:1075px;width:80px;overflow:hidden"><div style="font-size:14px;line-height:14px;font-family:'Liberation Sans', sans-serif;transform:scaleX(0.84);transform-origin:0 0">96.000s</div></div>
<div class="t" style="left:877.2px;top:1075px;width:25.399999999999977px;overflow:hidden"><div style="font-size:14px;line-height:14px;font-family:'Liberation Sans', sans-serif;transform:scaleX(0.84);transform-origin:0 0">120.000s</div></div>
<div class="t" style="left:918px;top:778.5px;font-size:13px;line-height:14px;font-family:'Liberation Sans', sans-serif">放大</div>
<div class="t" style="left:918px;top:804.7px;font-size:13px;line-height:14px;font-family:'Liberation Sans', sans-serif">缩小</div>
<div class="t" style="left:918px;top:830.9px;font-size:13px;line-height:14px;font-family:'Liberation Sans', sans-serif">全屏</div>
<div class="r" style="left:146px;top:1095px;width:804px;height:1px;background:#aca899"></div>
<div class="r" style="left:146px;top:1096px;width:804px;height:1px;background:#fff"></div>
<div class="r" style="left:216px;top:1102px;width:682px;height:294px;background:#fff"></div>
<svg class="r" style="left:0px;top:0px" width="950" height="1344" viewBox="0 0 950 1344"><clipPath id="c1102"><rect x="216" y="1102" width="682" height="294"/></clipPath><g clip-path="url(#c1102)"><line x1="285.5" y1="1102" x2="285.5" y2="1396" stroke="#8c8c8c" stroke-width="1" stroke-dasharray="3.2 3.2" stroke-dashoffset="1"/><line x1="353.5" y1="1102" x2="353.5" y2="1396" stroke="#8c8c8c" stroke-width="1" stroke-dasharray="3.2 3.2" stroke-dashoffset="1"/><line x1="421.5" y1="1102" x2="421.5" y2="1396" stroke="#8c8c8c" stroke-width="1" stroke-dasharray="3.2 3.2" stroke-dashoffset="1"/><line x1="489.5" y1="1102" x2="489.5" y2="1396" stroke="#8c8c8c" stroke-width="1" stroke-dasharray="3.2 3.2" stroke-dashoffset="1"/><line x1="557.5" y1="1102" x2="557.5" y2="1396" stroke="#8c8c8c" stroke-width="1" stroke-dasharray="3.2 3.2" stroke-dashoffset="1"/><line x1="625.5" y1="1102" x2="625.5" y2="1396" stroke="#8c8c8c" stroke-width="1" stroke-dasharray="3.2 3.2" stroke-dashoffset="1"/><line x1="693.5" y1="1102" x2="693.5" y2="1396" stroke="#8c8c8c" stroke-width="1" stroke-dasharray="3.2 3.2" stroke-dashoffset="1"/><line x1="761.5" y1="1102" x2="761.5" y2="1396" stroke="#8c8c8c" stroke-width="1" stroke-dasharray="3.2 3.2" stroke-dashoffset="1"/><line x1="829.5" y1="1102" x2="829.5" y2="1396" stroke="#8c8c8c" stroke-width="1" stroke-dasharray="3.2 3.2" stroke-dashoffset="1"/><line x1="216" y1="1162.5" x2="898" y2="1162.5" stroke="#8c8c8c" stroke-width="1" stroke-dasharray="3.2 3.2" stroke-dashoffset="1"/><line x1="216" y1="1221.5" x2="898" y2="1221.5" stroke="#8c8c8c" stroke-width="1" stroke-dasharray="3.2 3.2" stroke-dashoffset="1"/><line x1="216" y1="1280.5" x2="898" y2="1280.5" stroke="#8c8c8c" stroke-width="1" stroke-dasharray="3.2 3.2" stroke-dashoffset="1"/><line x1="216" y1="1339.5" x2="898" y2="1339.5" stroke="#8c8c8c" stroke-width="1" stroke-dasharray="3.2 3.2" stroke-dashoffset="1"/></g></svg>
<div class="r" style="left:215px;top:1102px;width:684px;height:294px;border-top:1px solid #1e1e1e;border-left:2px solid #5a5a5a;border-right:2px solid #5a5a5a;border-bottom:2px solid #2a2a2a;box-sizing:border-box"></div>
<svg class="r" style="left:0;top:0" width="950" height="1344"><polyline points="220.0,1227.4 220.8,1194.7 223.0,1227.4 226.3,1231.0 227.1,1197.1 229.3,1231.0 232.6,1230.6 233.4,1196.4 235.6,1230.6 238.9,1222.4 239.7,1186.4 241.9,1222.4 245.2,1225.7 246.0,1199.2 248.2,1225.7 251.5,1216.0 252.3,1198.6 254.5,1216.0 257.8,1218.4 258.6,1192.6 260.8,1218.4 264.1,1224.3 264.9,1193.6 267.1,1224.3 270.4,1217.9 271.2,1186.2 273.4,1217.9 276.7,1230.5 277.5,1189.9 279.7,1230.5 283.0,1216.9 283.8,1196.7 286.0,1216.9 289.3,1216.5 290.1,1197.2 292.3,1216.5 295.6,1216.3 296.4,1194.6 298.6,1216.3 301.9,1229.7 302.7,1186.0 304.9,1229.7 308.2,1217.9 309.0,1188.9 311.2,1217.9 314.5,1229.7 315.3,1199.8 317.5,1229.7 320.8,1231.3 321.6,1190.1 323.8,1231.3 327.1,1226.2 327.9,1193.5 330.1,1226.2 333.4,1230.9 334.2,1188.9 336.4,1230.9 339.7,1231.4 340.5,1195.7 342.7,1231.4 346.0,1219.4 346.8,1198.5 349.0,1219.4 352.3,1217.0 353.1,1191.1 355.3,1217.0 358.6,1215.2 359.4,1188.0 361.6,1215.2 364.9,1224.9 365.7,1190.2 367.9,1224.9 371.2,1226.2 372.0,1186.0 374.2,1226.2 377.5,1219.6 378.3,1190.7 380.5,1219.6 383.8,1222.7 384.6,1197.5 386.8,1222.7 390.1,1222.7 390.9,1190.4 393.1,1222.7 396.4,1215.0 397.2,1195.9 399.4,1215.0 402.7,1214.4 403.5,1199.7 405.7,1214.4 409.0,1229.2 409.8,1196.5 412.0,1229.2 415.3,1228.2 416.1,1186.3 418.3,1228.2 421.6,1224.4 422.4,1191.1 424.6,1224.4 427.9,1214.8 428.7,1186.1 430.9,1214.8 434.2,1231.2 435.0,1188.5 437.2,1231.2 440.5,1227.6 441.3,1188.8 443.5,1227.6 446.8,1231.0 447.6,1199.0 449.8,1231.0 453.1,1220.4 453.9,1190.8 456.1,1220.4 459.4,1228.0 460.2,1193.3 462.4,1228.0 465.7,1227.5 466.5,1187.5 468.7,1227.5 472.0,1229.5 472.8,1197.2 475.0,1229.5 478.3,1231.0 479.1,1186.5 481.3,1231.0 484.6,1220.1 485.4,1187.3 487.6,1220.1 490.9,1230.5 491.7,1194.6 493.9,1230.5 497.2,1230.6 498.0,1190.8 500.2,1230.6 503.5,1219.6 504.3,1193.6 506.5,1219.6 509.8,1217.2 510.6,1190.4 512.8,1217.2 516.1,1216.7 516.9,1187.1 519.1,1216.7 522.4,1231.9 523.2,1195.6 525.4,1231.9 528.7,1214.9 529.5,1188.3 531.7,1214.9 535.0,1223.6 535.8,1199.8 538.0,1223.6 541.3,1218.3 542.1,1191.7 544.3,1218.3 547.6,1228.9 548.4,1194.3 550.6,1228.9 553.9,1221.6 554.7,1192.4 556.9,1221.6 560.2,1230.5 561.0,1186.8 563.2,1230.5 566.5,1222.9 567.3,1186.5 569.5,1222.9 572.8,1216.4 573.6,1197.7 575.8,1216.4 579.1,1231.1 579.9,1196.2 582.1,1231.1 585.4,1228.2 586.2,1194.8 588.4,1228.2 591.7,1221.8 592.5,1187.5 594.7,1221.8 598.0,1229.2 598.8,1188.1 601.0,1229.2 604.3,1222.2 605.1,1190.1 607.3,1222.2 610.6,1229.3 611.4,1200.0 613.6,1229.3 616.9,1222.2 617.7,1199.7 619.9,1222.2 623.2,1227.1 624.0,1192.8 626.2,1227.1 629.5,1219.2 630.3,1192.7 632.5,1219.2 635.8,1216.6 636.6,1191.7 638.8,1216.6 642.1,1231.8 642.9,1191.3 645.1,1231.8 648.4,1225.3 649.2,1199.4 651.4,1225.3 654.7,1220.1 655.5,1193.0 657.7,1220.1 661.0,1218.9 661.8,1187.2 664.0,1218.9 667.3,1229.6 668.1,1196.9 670.3,1229.6" fill="none" stroke="#777" stroke-width="1.2"/></svg>
<svg class="r" style="left:0;top:0" width="950" height="1344"><polyline points="217.0,1230.0 217.6,1183.2 219.2,1206.7 220.4,1212.7 222.9,1236.2 223.3,1236.2 223.9,1184.1 225.5,1204.0 226.7,1210.0 229.2,1228.0 229.6,1228.0 230.2,1186.1 231.8,1202.0 233.0,1208.0 235.5,1229.3 235.9,1229.3 236.5,1175.8 238.1,1205.0 239.3,1211.0 241.8,1236.6 242.2,1236.6 242.8,1150.3 244.4,1179.8 245.6,1185.8 248.1,1231.8 248.5,1231.8 249.1,1150.5 250.7,1185.8 251.9,1191.8 254.4,1231.1 254.8,1231.1 255.4,1189.5 257.0,1209.1 258.2,1215.1 260.7,1233.0 261.1,1233.0 261.7,1186.6 263.3,1209.9 264.5,1215.9 267.0,1229.1 267.4,1229.1 268.0,1191.9 269.6,1209.2 270.8,1215.2 273.3,1233.8 273.7,1233.8 274.3,1179.7 275.9,1203.4 277.1,1209.4 279.6,1226.8 280.0,1226.8 280.6,1182.4 282.2,1208.3 283.4,1214.3 285.9,1230.3 286.3,1230.3 286.9,1166.5 288.5,1197.4 289.7,1203.4 292.2,1236.0 292.6,1236.0 293.2,1191.7 294.8,1208.4 296.0,1214.4 298.5,1226.8 298.9,1226.8 299.5,1188.5 301.1,1204.5 302.3,1210.5 304.8,1227.0 305.2,1227.0 305.8,1191.4 307.4,1205.2 308.6,1211.2 311.1,1228.7 311.5,1228.7 312.1,1177.0 313.7,1201.2 314.9,1207.2 317.4,1232.2 317.8,1232.2 318.4,1179.1 320.0,1199.2 321.2,1205.2 323.7,1233.1 324.1,1233.1 324.7,1182.7 326.3,1207.9 327.5,1213.9 330.0,1229.0 330.4,1229.0 331.0,1188.9 332.6,1207.2 333.8,1213.2 336.3,1235.7 336.7,1235.7 337.3,1182.3 338.9,1201.1 340.1,1207.1 342.6,1233.1 343.0,1233.1 343.6,1191.8 345.2,1210.5 346.4,1216.5 348.9,1228.8 349.3,1228.8 349.9,1181.3 351.5,1204.5 352.7,1210.5 355.2,1239.5 355.6,1239.5 356.2,1185.6 357.8,1205.9 359.0,1211.9 361.5,1231.0 361.9,1231.0 362.5,1185.2 364.1,1214.1 365.3,1220.1 367.8,1241.5 368.2,1241.5 368.8,1180.0 370.4,1209.1 371.6,1215.1 374.1,1234.1 374.5,1234.1 375.1,1179.1 376.7,1205.8 377.9,1211.8 380.4,1235.7 380.8,1235.7 381.4,1182.7 383.0,1206.4 384.2,1212.4 386.7,1226.4 387.1,1226.4 387.7,1179.8 389.3,1205.7 390.5,1211.7 393.0,1235.1 393.4,1235.1 394.0,1163.0 395.6,1188.2 396.8,1194.2 399.3,1226.8 399.7,1226.8 400.3,1184.9 401.9,1208.5 403.1,1214.5 405.6,1229.1 406.0,1229.1 406.6,1154.8 408.2,1182.4 409.4,1188.4 411.9,1230.9 412.3,1230.9 412.9,1178.8 414.5,1210.2 415.7,1216.2 418.2,1238.2 418.6,1238.2 419.2,1191.7 420.8,1207.8 422.0,1213.8 424.5,1236.8 424.9,1236.8 425.5,1176.3 427.1,1196.6 428.3,1202.6 430.8,1233.7 431.2,1233.7 431.8,1186.2 433.4,1206.6 434.6,1212.6 437.1,1242.0 437.5,1242.0 438.1,1184.7 439.7,1210.2 440.9,1216.2 443.4,1235.9 443.8,1235.9 444.4,1187.3 446.0,1207.8 447.2,1213.8 449.7,1236.1 450.1,1236.1 450.7,1187.0 452.3,1208.0 453.5,1214.0 456.0,1235.6 456.4,1235.6 457.0,1188.6 458.6,1209.4 459.8,1215.4 462.3,1232.3 462.7,1232.3 463.3,1182.1 464.9,1200.6 466.1,1206.6 468.6,1232.7 469.0,1232.7 469.6,1186.2 471.2,1210.7 472.4,1216.7 474.9,1235.7 475.3,1235.7 475.9,1182.2 477.5,1204.2 478.7,1210.2 481.2,1232.4 481.6,1232.4 482.2,1189.4 483.8,1205.4 485.0,1211.4 487.5,1234.3 487.9,1234.3 488.5,1185.6 490.1,1206.6 491.3,1212.6 493.8,1228.5 494.2,1228.5 494.8,1184.0 496.4,1204.9 497.6,1210.9 500.1,1236.1 500.5,1236.1 501.1,1176.2 502.7,1198.5 503.9,1204.5 506.4,1233.5 506.8,1233.5 507.4,1178.7 509.0,1202.6 510.2,1208.6 512.7,1233.3 513.1,1233.3 513.7,1190.3 515.3,1207.0 516.5,1213.0 519.0,1233.3 519.4,1233.3 520.0,1182.9 521.6,1210.9 522.8,1216.9 525.3,1236.1 525.7,1236.1 526.3,1155.7 527.9,1188.0 529.1,1194.0 531.6,1227.5 532.0,1227.5 532.6,1189.4 534.2,1208.5 535.4,1214.5 537.9,1236.5 538.3,1236.5 538.9,1155.0 540.5,1186.7 541.7,1192.7 544.2,1228.4 544.6,1228.4 545.2,1155.7 546.8,1199.1 548.0,1205.1 550.5,1235.2 550.9,1235.2 551.5,1150.6 553.1,1181.0 554.3,1187.0 556.8,1235.6 557.2,1235.6 557.8,1155.6 559.4,1183.6 560.6,1189.6 563.1,1234.7 563.5,1234.7 564.1,1178.2 565.7,1203.0 566.9,1209.0 569.4,1226.3 569.8,1226.3 570.4,1179.8 572.0,1202.0 573.2,1208.0 575.7,1226.5 576.1,1226.5 576.7,1183.1 578.3,1208.7 579.5,1214.7 582.0,1233.2 582.4,1233.2 583.0,1191.3 584.6,1207.7 585.8,1213.7 588.3,1228.2 588.7,1228.2 589.3,1169.7 590.9,1194.4 592.1,1200.4 594.6,1233.9 595.0,1233.9 595.6,1180.4 597.2,1204.6 598.4,1210.6 600.9,1233.7 601.3,1233.7 601.9,1185.8 603.5,1208.5 604.7,1214.5 607.2,1230.3 607.6,1230.3 608.2,1190.5 609.8,1213.1 611.0,1219.1 613.5,1236.3 613.9,1236.3 614.5,1178.1 616.1,1201.4 617.3,1207.4 619.8,1232.9 620.2,1232.9 620.8,1185.1 622.4,1207.1 623.6,1213.1 626.1,1234.8 626.5,1234.8 627.1,1186.4 628.7,1209.2 629.9,1215.2 632.4,1233.9 632.8,1233.9 633.4,1187.5 635.0,1213.9 636.2,1219.9 638.7,1235.9 639.1,1235.9 639.7,1184.6 641.3,1208.0 642.5,1214.0 645.0,1229.5 645.4,1229.5 646.0,1181.6 647.6,1204.2 648.8,1210.2 651.3,1230.8 651.7,1230.8 652.3,1150.5 653.9,1181.1 655.1,1187.1 657.6,1234.9 658.0,1234.9 658.6,1156.0 660.2,1185.8 661.4,1191.8 663.9,1234.7 664.3,1234.7 664.9,1163.0 666.5,1198.3 667.7,1204.3 670.2,1235.2 672.5,1169.0" fill="none" stroke="#000" stroke-width="1.6" stroke-linejoin="miter"/></svg>
<svg class="r" style="left:0;top:0" width="950" height="1344"><line x1="561.5" y1="1103" x2="561.5" y2="1394" stroke="#ebe7d9" stroke-width="1.4"/></svg>
<div class="t" style="left:101px;width:112px;text-align:right;top:1101px;font-size:12px;line-height:12px;font-family:'Liberation Sans', sans-serif;color:#000">57.12360</div>
<div class="t" style="left:101px;width:112px;text-align:right;top:1150.1px;font-size:12px;line-height:12px;font-family:'Liberation Sans', sans-serif;color:#000">45.69888</div>
<div class="t" style="left:101px;width:112px;text-align:right;top:1211.5px;font-size:12px;line-height:12px;font-family:'Liberation Sans', sans-serif;color:#000">34.27416</div>
<div class="t" style="left:101px;width:112px;text-align:right;top:1272.8999999999999px;font-size:12px;line-height:12px;font-family:'Liberation Sans', sans-serif;color:#000">22.84944</div>
<div class="t" style="left:101px;width:112px;text-align:right;top:1334.3px;font-size:12px;line-height:12px;font-family:'Liberation Sans', sans-serif;color:#000">11.42472</div>
<div class="t" style="left:101px;width:112px;text-align:right;top:1395.6999999999998px;font-size:12px;line-height:12px;font-family:'Liberation Sans', sans-serif;color:#000">0.0</div>
<div class="t" style="left:148px;top:1255.5px;font-size:12px;line-height:12px;font-family:'Liberation Sans', sans-serif">电压(V)</div>
<div class="t" style="left:918px;top:1104.5px;font-size:13px;line-height:14px;font-family:'Liberation Sans', sans-serif">放大</div>
<div class="t" style="left:918px;top:1130.7px;font-size:13px;line-height:14px;font-family:'Liberation Sans', sans-serif">缩小</div>
<div class="t" style="left:918px;top:1156.9px;font-size:13px;line-height:14px;font-family:'Liberation Sans', sans-serif">全屏</div>
<div class="t" style="left:909px;top:1334px;font-size:13px;line-height:14px;color:#1c4fc8;font-family:'Liberation Sans', sans-serif">曲线</div>
<div class="r" style="left:903px;top:1340px;width:47px;height:1px;background:#d0cfc0"></div>
<div class="t" style="left:178px;top:1165px;font-size:16px;line-height:18px;letter-spacing:0.6px;font-family:'Liberation Serif', serif">分析：开路电压大约 12V 的波动，波动较大，并且波形不一致。</div>
</body></html>
